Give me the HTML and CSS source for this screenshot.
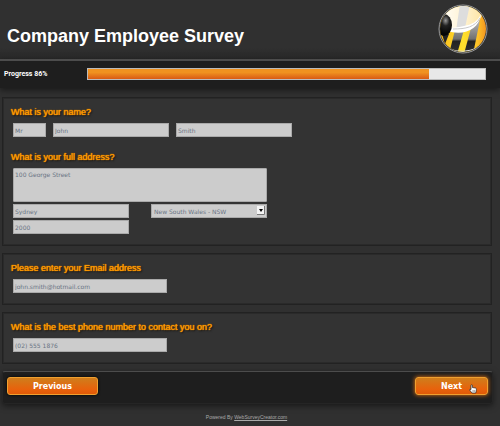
FILE: index.html
```html
<!DOCTYPE html>
<html lang="en">
<head>
<meta charset="utf-8">
<meta name="viewport" content="width=device-width, initial-scale=1.0">
<title>Company Employee Survey</title>
<link rel="stylesheet" href="styles.css">
</head>
<body>
  <header class="header">
    <h1>Company Employee Survey</h1>
    <svg class="logo" viewBox="0 0 50 50" aria-hidden="true">
      <defs>
        <clipPath id="ball"><circle cx="25" cy="25" r="23"/></clipPath>
        <linearGradient id="gold" x1="0" y1="0" x2="1" y2="0">
          <stop offset="0" stop-color="#f9b51c"/>
          <stop offset="0.5" stop-color="#ffe22c"/>
          <stop offset="0.8" stop-color="#fdc128"/>
          <stop offset="1" stop-color="#f08a1e"/>
        </linearGradient>
        <linearGradient id="stripe" gradientUnits="userSpaceOnUse" x1="0" y1="20" x2="0" y2="50">
          <stop offset="0" stop-color="#aaa"/>
          <stop offset="0.5" stop-color="#707070"/>
          <stop offset="0.58" stop-color="#222"/>
          <stop offset="1" stop-color="#333"/>
        </linearGradient>
        <linearGradient id="wing" x1="0" y1="0" x2="1" y2="0">
          <stop offset="0" stop-color="#fff"/>
          <stop offset="0.5" stop-color="#fff4d8"/>
          <stop offset="1" stop-color="#fde3a0"/>
        </linearGradient>
        <radialGradient id="head" cx="0.6" cy="0.3" r="0.6">
          <stop offset="0" stop-color="#999"/>
          <stop offset="0.4" stop-color="#222"/>
          <stop offset="1" stop-color="#050505"/>
        </radialGradient>
      </defs>
      <g clip-path="url(#ball)">
        <rect width="50" height="50" fill="url(#gold)"/>
        <path d="M4 30h7l-4 10z" fill="#222"/>
        <path d="M17 26h9l-7 24h-8z" fill="url(#stripe)"/>
        <path d="M33 24 42 16 35 50h-9z" fill="url(#stripe)"/>
        <path d="M0 0h46v4C45 17 32 29 12 28z" fill="url(#wing)"/>
        <path d="M22 0h10l-5 24-9 3z" fill="#ddd"/>
        <path d="M43 10C38 21 29 22 13 24v4c15 3 28-3 30-18z" fill="#fff"/>
        <path d="M42 14C37 23 28 25 15 25" fill="none" stroke="#c8c8c8"/>
        <ellipse cx="6" cy="21" rx="8" ry="11" fill="url(#head)"/>
        <path d="M11 45q14 5 28-1" fill="none" stroke="#ddd" stroke-width="1"/>
      </g>
      <circle cx="25" cy="25" r="24" fill="none" stroke="#999" stroke-width="1"/>
    </svg>
  </header>

  <div class="progress">
    <span class="progress-label">Progress 86%</span>
    <div class="track"><div class="bar" style="width: 86%"></div></div>
  </div>

  <form class="survey">
    <div class="panel panel-first">
      <h2>What is your name?</h2>
      <div class="name-row">
        <input class="field title" type="text" value="Mr" aria-label="Title">
        <input class="field medium" type="text" value="John" aria-label="First name">
        <input class="field medium" type="text" value="Smith" aria-label="Last name">
      </div>
      <h2>What is your full address?</h2>
      <div class="address">
        <textarea class="field street" aria-label="Street">100 George Street</textarea>
        <div class="city-row">
          <input class="field medium" type="text" value="Sydney" aria-label="City">
          <div class="state">
            <select class="field" aria-label="State"><option>New South Wales - NSW</option></select>
            <svg class="arrow" viewBox="0 0 8 9" aria-hidden="true"><path d="M0 0h8v9H0z" fill="#f4f4f4"/><path d="M0 8.5h7.5V0" fill="none" stroke="#777"/><path d="M2 3h4L4 6z" fill="#000"/></svg>
          </div>
        </div>
        <input class="field medium" type="text" value="2000" aria-label="Postcode">
      </div>
    </div>

    <div class="panel">
      <h2><label for="email">Please enter your Email address</label></h2>
      <input class="field wide" id="email" type="text" value="john.smith@hotmail.com">
    </div>

    <div class="panel">
      <h2><label for="phone">What is the best phone number to contact you on?</label></h2>
      <input class="field wide" id="phone" type="text" value="(02) 555 1876">
    </div>

    <div class="nav">
      <button class="btn" type="button">Previous</button>
      <button class="btn btn-next" type="button">Next
        <svg class="hand" viewBox="0 0 8 10" aria-hidden="true"><path d="M2 5V1.2Q2.700.4 3.400 1.200V3.500L6.500 4Q7.500 4.300 7.400 5.500L6.800 9H3L.6 6Q.5 4.700 2 5.500z" fill="#fff" stroke="#222" stroke-width="0.7"/><path d="M4 6v2M5.300 6v2" stroke="#444" stroke-width="0.5"/></svg>
      </button>
    </div>
  </form>

  <footer class="footer">Powered By <a href="#">WebSurveyCreator.com</a></footer>
</body>
</html>
```
FILE: styles.css
```css
* {
  margin: 0;
  padding: 0;
  box-sizing: border-box;
}
body {
  font-family: "Liberation Sans", Arial, sans-serif;
  background-color: #303030;
  color: #fff;
}
.header {
  display: flex;
  justify-content: space-between;
  align-items: flex-start;
  height: 59px;
  padding: 4px 12px 0 7px;
  background: linear-gradient(#303030 80%, #292929);
}
h1 {
  font-size: 18px;
  line-height: 22px;
  padding-top: 21px;
}
.logo {
  width: 50px;
  height: 50px;
}

/* progress */
.progress {
  display: flex;
  align-items: center;
  height: 29px;
  padding: 0 14px 2px 4px;
  background-color: #1e1e1e;
  border-top: 2px solid #4c4c4c;
  box-shadow: 0 2px 6px rgba(0, 0, 0, 0.5);
}
.progress-label {
  width: 83px;
  font-family: Roboto, Arial, sans-serif;
  font-size: 7px;
  font-weight: bold;
}
.track {
  flex: 1;
  height: 12px;
  background-color: #e8e8e8;
  border: 1px solid #bbb;
}
.bar {
  height: 10px;
  background: linear-gradient(#f09220 35%, #d95a14);
}

/* questions */
.survey {
  display: flex;
  flex-direction: column;
  gap: 7px;
  padding: 9px 7px 0 2px;
}
.panel {
  margin-right: 1px;
  padding: 9px 8px 11px;
  background-color: #333;
  border: 1px solid #222;
  box-shadow: inset 0 0 0 1px #2a2a2a;
}
.panel-first {
  min-height: 149px;
}
h2 {
  color: #f90;
  font-size: 9px;
  font-weight: normal;
  line-height: 10px;
  text-shadow: 0 0 1px #f90, 0 0 1px #f90, 1px 1px 2px #000;
}
.panel > .field,
.name-row,
.address {
  margin: 6px 2px 0;
}
.name-row {
  display: flex;
  gap: 7px;
  margin-bottom: 15px;
}
.address {
  display: flex;
  flex-direction: column;
  align-items: flex-start;
  gap: 2px;
}
.field {
  display: block;
  height: 14px;
  padding: 0 1px;
  font-family: "DejaVu Sans", Verdana, sans-serif;
  font-size: 6px;
  color: #6a7484;
  background-color: #ccc;
  border: 1px solid #aaa;
  border-radius: 0;
  outline: none;
}
.title {
  width: 33px;
}
.medium {
  width: 116px;
}
.wide {
  width: 154px;
}
.street {
  width: 254px;
  height: 34px;
  padding-top: 2px;
  border-radius: 1px;
  resize: none;
}
.city-row {
  display: flex;
  gap: 22px;
}
.state {
  position: relative;
}
.state .field {
  width: 116px;
  padding: 0 2px;
  appearance: none;
}
.arrow {
  position: absolute;
  right: 2px;
  top: 2px;
  width: 8px;
  height: 9px;
  pointer-events: none;
}

/* buttons */
.nav {
  display: flex;
  justify-content: space-between;
  padding: 5px 4px 8px;
  background-color: #1e1e1e;
  border: 1px solid #252525;
  border-top-color: #4c4c4c;
  border-radius: 3px;
  box-shadow: 0 2px 6px rgba(0, 0, 0, 0.5);
}
.btn {
  width: 91px;
  height: 18px;
  font-family: "DejaVu Sans", Verdana, sans-serif;
  font-size: 8px;
  font-weight: bold;
  color: #fff;
  background: linear-gradient(#cf7e1c, #e8620c 70%, #e05a08);
  border: 1px solid #f0a030;
  border-radius: 3px;
  box-shadow: 0 0 3px #000;
}
.btn-next {
  position: relative;
  width: 73px;
  box-shadow: 0 0 4px #f07810;
}
.hand {
  position: absolute;
  right: 10px;
  bottom: 0;
  width: 8px;
  height: 10px;
}
.footer {
  padding: 9px 7px 0 0;
  font-size: 5px;
  line-height: 8px;
  text-align: center;
  color: #aaa;
}
.footer a {
  color: #aaa;
}
```
